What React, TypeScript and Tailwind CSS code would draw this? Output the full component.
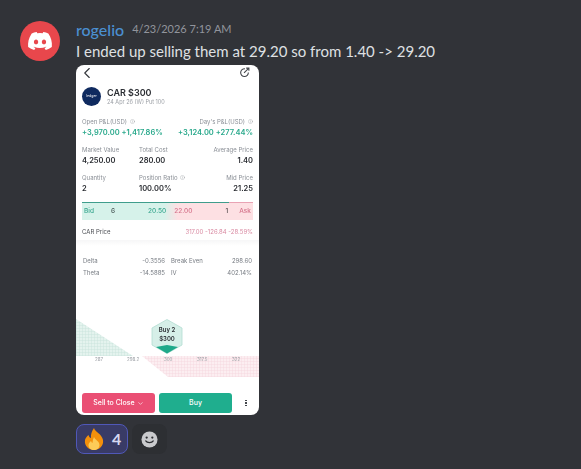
import React from "react";
import { FaDiscord } from "react-icons/fa6";
import { ChevronLeft, ChevronDown, Info } from "lucide-react";

function Label({ children, info }: { children: React.ReactNode; info?: boolean }) {
  return (
    <div className="flex items-center gap-[3px] text-[6px] leading-[9px] text-[#8a8f96]">
      {children}
      {info && <Info size={5} strokeWidth={1.5} />}
    </div>
  );
}

function Stat({ label, value, info, right }: { label: string; value: string; info?: boolean; right?: boolean }) {
  return (
    <div className={right ? "flex flex-col items-end" : "flex flex-col"}>
      <Label info={info}>{label}</Label>
      <div className="mt-[2px] text-[7.5px] leading-[10px] font-semibold text-[#2b2e33]">{value}</div>
    </div>
  );
}

function Greek({ a, b, c, d }: { a: string; b: string; c: string; d: string }) {
  return (
    <div className="flex h-[12.5px] items-center text-[6px] text-[#777c83]">
      <span className="w-[54px]">{a}</span>
      <span className="w-[28px] text-right">{b}</span>
      <span className="ml-[6px] w-[36px]">{c}</span>
      <span className="flex-1 text-right">{d}</span>
    </div>
  );
}

function Chart() {
  return (
    <div className="relative h-[66px] w-full">
      <svg width="183" height="66" className="absolute inset-0">
        <defs>
          <pattern id="g" width="3" height="3" patternUnits="userSpaceOnUse">
            <rect width="3" height="3" fill="#e4f3ee" />
            <path d="M0 0H3M0 0V3" stroke="#c6e2da" strokeWidth="0.8" />
          </pattern>
          <pattern id="p" width="3" height="3" patternUnits="userSpaceOnUse">
            <rect width="3" height="3" fill="#fceef1" />
            <path d="M0 0H3M0 0V3" stroke="#f5d5dd" strokeWidth="0.8" />
          </pattern>
        </defs>
        <path d="M0 0L57 37H0Z" fill="url(#g)" />
        <path d="M66 37H183V58H92Z" fill="url(#p)" />
        <path d="M91 0.500L106 9V26L91 34.500L76 26V9Z" fill="#d6efe8" stroke="#b3ddd2" strokeWidth="0.8" />
        <path d="M80 28L91 26L102 28L91 34.500Z" fill="#1fa98a" />
      </svg>
      <div className="absolute top-[7px] left-[76px] flex w-[30px] flex-col items-center text-[6px] leading-[8.5px] font-semibold text-[#2b2e33]">
        <span>Buy 2</span>
        <span>$300</span>
      </div>
      <div className="absolute top-[38px] left-0 w-full text-[4.5px] text-[#9a9ea4]">
        <span className="absolute left-[19px]">287</span>
        <span className="absolute left-[51px]">298.2</span>
        <span className="absolute left-[88px]">300</span>
        <span className="absolute left-[121px]">317.5</span>
        <span className="absolute left-[156px]">322</span>
      </div>
    </div>
  );
}

function Shot() {
  return (
    <div className="mt-[3px] flex h-[350px] w-[183px] flex-col overflow-hidden rounded-[8px] bg-white font-['Inter',sans-serif] blur-[0.35px]">
      <div className="flex h-[15px] items-center justify-between pr-[9px] text-[#33363b]">
        <ChevronLeft size={18} strokeWidth={1.5} className="ml-[2px]" />
        <svg width="11" height="11" viewBox="0 0 12 12" fill="none" stroke="#44474c" strokeWidth="1.2">
          <path d="M6.5 2A4.2 4.2 0 1 0 10.2 6" />
          <path d="M5.5 6.5L10.5 1.5M7.8 1.2H10.8V4.2" />
        </svg>
      </div>
      <div className="mt-[7px] flex items-center gap-[6px] px-[6px]">
        <div className="flex h-[19px] w-[19px] items-center justify-center rounded-full bg-[#0f2a5f] text-[3.5px] text-white">
          ledger
        </div>
        <div className="flex flex-col">
          <div className="text-[9px] leading-[11px] font-semibold text-[#2b2e33]">CAR $300</div>
          <div className="text-[5.5px] leading-[8px] text-[#9a9ea4]">24 Apr 26 (W) Put 100</div>
        </div>
      </div>

      <div className="mt-[11px] flex justify-between px-[6px]">
        <div className="flex flex-col">
          <Label info>Open P&amp;L(USD)</Label>
          <div className="mt-[1px] text-[7.5px] leading-[11px] font-semibold text-[#2aa98c]">+3,970.00 +1,417.86%</div>
        </div>
        <div className="flex flex-col items-end">
          <Label info>Day's P&amp;L(USD)</Label>
          <div className="mt-[1px] text-[7.5px] leading-[11px] font-semibold text-[#2aa98c]">+3,124.00 +277.44%</div>
        </div>
      </div>

      <div className="mt-[7px] grid grid-cols-[57px_1fr_1fr] gap-y-[7px] px-[6px]">
        <Stat label="Market Value" value="4,250.00" />
        <Stat label="Total Cost" value="280.00" />
        <Stat label="Average Price" value="1.40" right />
        <Stat label="Quantity" value="2" />
        <Stat label="Position Ratio" value="100.00%" info />
        <Stat label="Mid Price" value="21.25" right />
      </div>

      <div className="mt-[8px] px-[6px]">
        <div className="flex h-px">
          <div className="w-[147px] bg-[#3f9d8c]" />
          <div className="flex-1 bg-[#e9a3b4]" />
        </div>
        <div className="flex h-[17px] items-center bg-[linear-gradient(to_right,#d6f2ea_48%,#fde0e3_56%)] px-[2px] text-[6.5px] font-medium">
          <span className="w-[27px] text-[#3aa78f]">Bid</span>
          <span className="text-[#4a5a58]">6</span>
          <span className="ml-[33px] text-[#3aa78f]">20.50</span>
          <span className="ml-[8px] text-[#d4728a]">22.00</span>
          <span className="ml-[33px] text-[#5a5054]">1</span>
          <span className="ml-auto text-[#d4728a]">Ask</span>
        </div>
      </div>

      <div className="mt-[7px] flex items-center justify-between px-[6px] text-[6px] leading-[9px]">
        <span className="text-[#4a4d52]">CAR Price</span>
        <span className="text-[#d98aa2]">317.00 -126.84 -28.59%</span>
      </div>

      <div className="mt-[4px] h-[6px] bg-gradient-to-b from-[#f6f6f7] to-white" />

      <div className="mt-[8px] px-[7px]">
        <Greek a="Delta" b="-0.3556" c="Break Even" d="298.60" />
        <Greek a="Theta" b="-14.5885" c="IV" d="402.14%" />
      </div>

      <div className="mt-[40px]">
        <Chart />
      </div>

      <div className="mt-[8px] flex items-center px-[6px]">
        <button className="flex h-[20px] w-[73px] items-center justify-center gap-[2px] rounded-[3px] bg-[#ea4f74] text-[7px] font-medium text-white">
          Sell to Close <ChevronDown size={7} />
        </button>
        <button className="ml-[4px] h-[20px] w-[73px] rounded-[3px] bg-[#1fae8e] text-[7px] font-medium text-white">
          Buy
        </button>
        <div className="ml-[13px] flex flex-col gap-[1px]">
          <span className="h-[1.5px] w-[1.5px] bg-[#44474c]" />
          <span className="h-[1.5px] w-[1.5px] bg-[#44474c]" />
          <span className="h-[1.5px] w-[1.5px] bg-[#44474c]" />
        </div>
      </div>
    </div>
  );
}

export default function App() {
  return (
    <div className="flex h-[469px] w-[581px] items-start overflow-hidden bg-[#313338] pt-[21px] pl-[20px] font-['Lato',sans-serif]">
      <div className="flex h-[40px] w-[40px] items-center justify-center rounded-full bg-[#e8474c] text-white">
        <FaDiscord size={26} />
      </div>
      <div className="ml-[16px] flex flex-col">
        <div className="flex h-[17px] items-center gap-[8px]">
          <span className="text-[16px] font-medium text-[#4b8fd1]">rogelio</span>
          <span className="text-[11px] text-[#92959c]">4/23/2026 7:19 AM</span>
        </div>
        <div className="mt-[2px] text-[15px] leading-[22px] text-[#dfe0e3]">
          I ended up selling them at 29.20 so from 1.40 -&gt; 29.20
        </div>
        <Shot />
        <div className="mt-[9px] flex items-center gap-[4px]">
          <div className="flex h-[30px] w-[52px] items-center gap-[8px] rounded-[8px] border border-[#5058b8] bg-[#393b66] pl-[7px]">
            <svg width="20" height="22" viewBox="0 0 20 22">
              <path d="M10 0C11 4 18 6 19 12C20 18 15 22 10 22C5 22 0 18 1 12C1.500 10 3 8 4.500 7C5 9 6 10 7 10C6.500 6 8 3 10 0Z" fill="#f4900c" />
              <path d="M10 9C11 12 15.500 13 15.500 17C15.500 20 13 22 10 22C7 22 4.500 20 4.500 17C4.500 15 6 14 7 13C7.500 14 8 15 8.500 15C8.500 13 9 11 10 9Z" fill="#fdcb58" />
            </svg>
            <span className="text-[16px] font-bold text-[#d5d8f0]">4</span>
          </div>
          <div className="flex h-[30px] w-[35px] items-center justify-center rounded-[8px] bg-[#2d2f33]">
            <svg width="17" height="17" viewBox="0 0 18 18">
              <circle cx="9" cy="9" r="8.500" fill="#c9cacd" />
              <circle cx="6" cy="7" r="1.200" fill="#2b2d31" />
              <circle cx="12" cy="7" r="1.200" fill="#2b2d31" />
              <path d="M5 10.500C6.500 13 11.500 13 13 10.500" fill="none" stroke="#2b2d31" strokeWidth="1.300" strokeLinecap="round" />
            </svg>
          </div>
        </div>
      </div>
    </div>
  );
}
